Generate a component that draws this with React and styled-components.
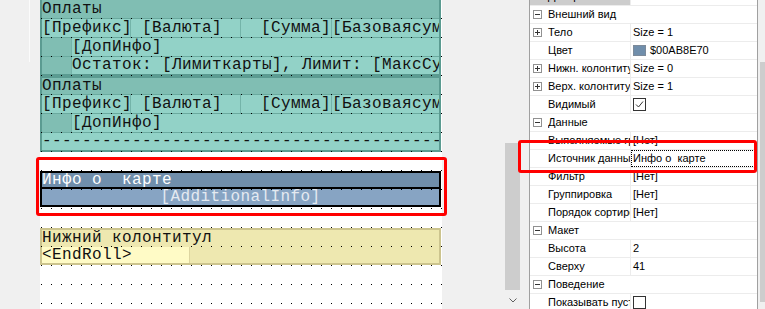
import React from 'react';
import styled, { createGlobalStyle } from 'styled-components';

const MONO = `"Liberation Mono", "Courier New", monospace`;
const SANS = `"Liberation Sans", Arial, sans-serif`;

const TEAL_DARK = '#80beb3';
const TEAL_LIGHT = '#92d2c7';
const TEAL_BORDER = '#5b9b91';
const TEAL_LINE = '#6aaa9f';
const TEAL_SEP = '#74b4a9';

const GlobalStyle = createGlobalStyle`
  html, body { margin: 0; padding: 0; background: #f0f0f0; overflow: hidden; }
  #root { width: 765px; height: 309px; overflow: hidden; }
`;

const Screen = styled.div`
  position: relative;
  display: flex;
  width: 765px;
  height: 309px;
  overflow: hidden;
  background: #f0f0f0;
`;

const Designer = styled.div`
  display: flex;
  flex: 0 0 504px;
  height: 100%;
`;

const Ruler = styled.div`
  flex: 0 0 40px;
  height: 100%;
  background:
    linear-gradient(to right, transparent 29px, #fbfbfb 29px, #fbfbfb 30px, transparent 30px) top left / 100% 62px no-repeat,
    #f0f0f0;
`;

const Page = styled.div`
  position: relative;
  flex: 0 0 402px;
  height: 100%;
  background: #fff;
  display: flex;
  flex-direction: column;
  overflow: hidden;
`;

const PageGap = styled.div`
  flex: 0 0 62px;
  height: 100%;
  background: #f0f0f0;
`;

const DotGrid = styled.svg`
  position: absolute;
  left: 0;
  top: 0;
  pointer-events: none;
`;

const Band = styled.div`
  flex: 0 0 auto;
  width: 401px;
  box-sizing: border-box;
  margin-top: ${p => p.$mt || 0}px;
  border: 2px solid ${p => p.$border};
  display: flex;
  flex-direction: column;
  font-family: ${MONO};
  font-size: 16px;
  letter-spacing: 0.4px;
  color: ${p => p.$color || '#111'};
`;

const BandTitle = styled.div`
  height: ${p => p.$h}px;
  line-height: ${p => p.$h}px;
  background: ${p => p.$bg};
  white-space: pre;
  overflow: hidden;
`;

const BandRow = styled.div`
  display: flex;
  height: ${p => p.$h}px;
  line-height: ${p => p.$h}px;
  border-top: ${p => p.$line || 1}px solid ${p => p.$lineColor};
  background: ${p => p.$bg || 'transparent'};
`;

const Field = styled.div`
  flex: ${p => (p.$w ? `0 0 ${p.$w}px` : '1 1 auto')};
  min-width: 0;
  box-sizing: border-box;
  padding: 0 ${p => p.$pr || 0}px 0 ${p => p.$pl || 0}px;
  text-align: ${p => p.$align || 'left'};
  background: ${p => p.$bg || 'transparent'};
  border-right: ${p => (p.$sep ? `1px solid ${p.$sep}` : 'none')};
  color: ${p => p.$color || 'inherit'};
  white-space: pre;
  overflow: hidden;
`;

const DScroll = styled.div`
  flex: 0 0 17px;
  height: 100%;
  display: flex;
  flex-direction: column;
  align-items: center;
  background: #f0f0f0;
`;

const Thumb = styled.div`
  flex: 0 0 ${p => p.$h}px;
  width: ${p => p.$w || 15}px;
  margin-top: ${p => p.$top}px;
  background: #cdcdcd;
`;

const ArrowBox = styled.div`
  margin-top: auto;
  height: 17px;
  display: flex;
  align-items: center;
  justify-content: center;
`;

const Splitter = styled.div`
  flex: 0 0 8px;
  height: 100%;
  background: #f0f0f0;
`;

const Inspector = styled.div`
  flex: 0 0 229px;
  height: 100%;
  box-sizing: border-box;
  border-left: 1px solid #a0a0a0;
  border-right: 1px solid #a0a0a0;
  background: #fff;
  overflow: hidden;
  font-family: ${SANS};
  font-size: 11px;
  color: #000;
`;

const PropList = styled.div`
  margin-top: -12px;
  display: flex;
  flex-direction: column;
`;

const PropRow = styled.div`
  display: flex;
  flex: 0 0 17px;
  height: 17px;
  line-height: 17px;
  border-bottom: 1px solid #ececec;
`;

const NameCell = styled.div`
  flex: 0 0 100px;
  display: flex;
  align-items: center;
  border-right: 1px solid #ececec;
  background: ${p => (p.$selected ? '#cdcdcd' : 'transparent')};
  white-space: nowrap;
  overflow: hidden;
`;

const CatLabel = styled.div`
  flex: 1;
  white-space: nowrap;
  overflow: hidden;
`;

const Gutter = styled.div`
  flex: 0 0 18px;
  box-sizing: border-box;
  padding-left: 3px;
  display: flex;
  align-items: center;
`;

const ValueCell = styled.div`
  flex: 1 1 auto;
  min-width: 0;
  display: flex;
  align-items: center;
  gap: 4px;
  padding-left: 2px;
  white-space: pre;
  overflow: hidden;
  outline: ${p => (p.$focus ? '1px dotted #000' : 'none')};
  outline-offset: -1px;
`;

const Swatch = styled.span`
  flex: 0 0 auto;
  width: 13px;
  height: 11px;
  box-sizing: border-box;
  background: ${p => p.$color};
  border: 1px solid #7d8a99;
`;

const PanelScroll = styled.div`
  flex: 0 0 17px;
  height: 100%;
  display: flex;
  flex-direction: column;
  padding-left: 2px;
  box-sizing: border-box;
  background: #f0f0f0;
`;

const Highlight = styled.div`
  position: absolute;
  left: ${p => p.$x}px;
  top: ${p => p.$y}px;
  width: ${p => p.$w}px;
  height: ${p => p.$h}px;
  box-sizing: border-box;
  border: 3px solid #ff0000;
  border-radius: 3px;
  pointer-events: none;
`;

const Expander = ({ open }) => (
  <svg width="9" height="9" viewBox="0 0 9 9">
    <rect x="0.5" y="0.5" width="8" height="8" fill="#fff" stroke="#919191" />
    <line x1="2" y1="4.5" x2="7" y2="4.5" stroke="#333" />
    {!open && <line x1="4.5" y1="2" x2="4.5" y2="7" stroke="#333" />}
  </svg>
);

const CheckBox = ({ checked }) => (
  <svg width="13" height="13" viewBox="0 0 13 13">
    <rect x="0.5" y="0.5" width="12" height="12" fill="#fff" stroke="#333" />
    {checked && (
      <polyline points="3,6.5 5.5,9 10,3.5" fill="none" stroke="#333" strokeWidth="1" />
    )}
  </svg>
);

const props = [
  { name: 'Дочерний', value: '', selected: true },
  { cat: 'Внешний вид' },
  { name: 'Тело', value: 'Size = 1', expand: true },
  { name: 'Цвет', value: '$00AB8E70', swatch: '#708eab' },
  { name: 'Нижн. колонтитул', value: 'Size = 0', expand: true },
  { name: 'Верх. колонтитул', value: 'Size = 1', expand: true },
  { name: 'Видимый', check: true },
  { cat: 'Данные' },
  { name: 'Выполняемые группы', value: '[Нет]' },
  { name: 'Источник данных', value: 'Инфо о  карте', focus: true },
  { name: 'Фильтр', value: '[Нет]' },
  { name: 'Группировка', value: '[Нет]' },
  { name: 'Порядок сортировки', value: '[Нет]' },
  { cat: 'Макет' },
  { name: 'Высота', value: '2' },
  { name: 'Сверху', value: '41' },
  { cat: 'Поведение' },
  { name: 'Показывать пустые', check: false },
];

export default function App() {
  return (
    <>
      <GlobalStyle />
      <Screen>
        <Designer>
          <Ruler />
          <Page>
            <Band $mt={-2} $border={TEAL_BORDER}>
              <BandTitle $h={18} $bg={TEAL_DARK}>Оплаты</BandTitle>
              <BandRow $h={18} $lineColor={TEAL_LINE} $bg={TEAL_LIGHT}>
                <Field $w={89} $sep={TEAL_SEP}>[Префикс]</Field>
                <Field $w={110} $pl={11} $sep={TEAL_SEP}>[Валюта]</Field>
                <Field $w={91} $align="right" $sep={TEAL_SEP}>[Сумма]</Field>
                <Field>[Базоваясумма]</Field>
              </BandRow>
              <BandRow $h={18} $lineColor={TEAL_LINE} $bg={TEAL_LIGHT}>
                <Field $w={30} $bg={TEAL_DARK} $sep={TEAL_SEP} />
                <Field>[ДопИнфо]</Field>
              </BandRow>
              <BandRow $h={17} $lineColor={TEAL_LINE} $bg={TEAL_LIGHT}>
                <Field $w={30} $bg={TEAL_DARK} $sep={TEAL_SEP} />
                <Field>Остаток: [Лимиткарты], Лимит: [МаксСумма]</Field>
              </BandRow>
            </Band>

            <Band $border={TEAL_BORDER}>
              <BandTitle $h={16} $bg={TEAL_DARK}>Оплаты</BandTitle>
              <BandRow $h={18} $lineColor={TEAL_LINE} $bg={TEAL_LIGHT}>
                <Field $w={89} $sep={TEAL_SEP}>[Префикс]</Field>
                <Field $w={110} $pl={11} $sep={TEAL_SEP}>[Валюта]</Field>
                <Field $w={91} $align="right" $sep={TEAL_SEP}>[Сумма]</Field>
                <Field>[Базоваясумма]</Field>
              </BandRow>
              <BandRow $h={18} $lineColor={TEAL_LINE} $bg={TEAL_LIGHT}>
                <Field $w={30} $bg={TEAL_DARK} $sep={TEAL_SEP} />
                <Field>[ДопИнфо]</Field>
              </BandRow>
              <BandRow $h={17} $lineColor={TEAL_LINE} $bg={TEAL_LIGHT}>
                <Field>{'-'.repeat(45)}</Field>
              </BandRow>
            </Band>

            <Band $mt={19} $border="#000" $color="#ffffff">
              <BandTitle $h={14} $bg="#708eab">Инфо о  карте</BandTitle>
              <BandRow $h={16} $line={2} $lineColor="#000" $bg="#87a4c3">
                <Field $align="center" $color="#e4eaf1">[AdditionalInfo]</Field>
              </BandRow>
            </Band>

            <Band $mt={21} $border="#ccc48e" $color="#111">
              <BandTitle $h={16} $bg="#eee8b0">Нижний колонтитул</BandTitle>
              <BandRow $h={16} $line={0} $lineColor="transparent" $bg="#eee8b0">
                <Field $w={148} $bg="#fffbc6" $sep="#ddd5a0">&lt;EndRoll&gt;</Field>
              </BandRow>
            </Band>

            <DotGrid width="402" height="309">
              <defs>
                <pattern id="dots" x="1" y="18" width="10" height="19" patternUnits="userSpaceOnUse">
                  <rect x="0" y="0" width="1" height="1" fill="#000" />
                </pattern>
              </defs>
              <rect x="0" y="0" width="402" height="309" fill="url(#dots)" shapeRendering="crispEdges" />
            </DotGrid>
          </Page>
          <PageGap />
        </Designer>

        <DScroll>
          <Thumb $top={143} $h={147} />
          <ArrowBox>
            <svg width="8" height="5" viewBox="0 0 8 5">
              <polyline points="0.5,0.5 4,4 7.5,0.5" fill="none" stroke="#606060" strokeWidth="1" />
            </svg>
          </ArrowBox>
        </DScroll>

        <Splitter />

        <Inspector>
          <PropList>
            {props.map((p, i) =>
              p.cat ? (
                <PropRow key={i}>
                  <Gutter><Expander open /></Gutter>
                  <CatLabel>{p.cat}</CatLabel>
                </PropRow>
              ) : (
                <PropRow key={i}>
                  <NameCell $selected={p.selected}>
                    <Gutter>{p.expand && <Expander />}</Gutter>
                    {p.name}
                  </NameCell>
                  <ValueCell $focus={p.focus}>
                    {p.swatch && <Swatch $color={p.swatch} />}
                    {p.check !== undefined ? <CheckBox checked={p.check} /> : p.value}
                  </ValueCell>
                </PropRow>
              )
            )}
          </PropList>
        </Inspector>

        <PanelScroll>
          <Thumb $top={62} $h={240} $w={13} />
        </PanelScroll>

        <Highlight $x={36} $y={157} $w={411} $h={59} />
        <Highlight $x={518} $y={140} $w={239} $h={33} />
      </Screen>
    </>
  );
}
